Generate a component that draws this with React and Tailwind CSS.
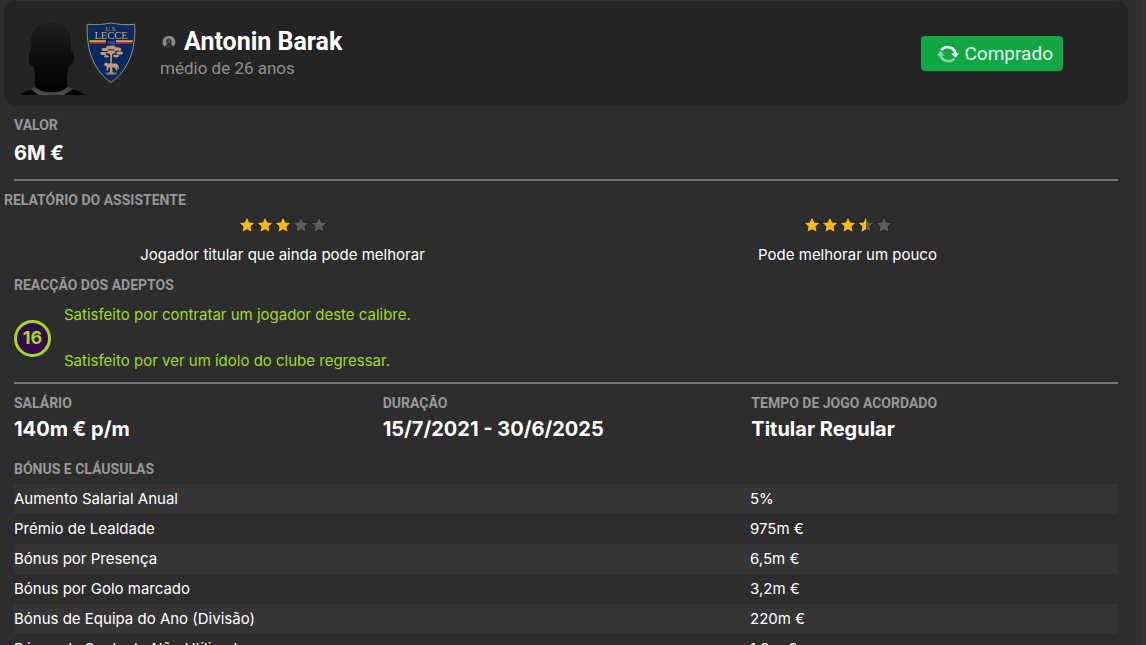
const bonuses = [
    { name: "Aumento Salarial Anual", value: "5%" },
    { name: "Prémio de Lealdade", value: "975m €" },
    { name: "Bónus por Presença", value: "6,5m €" },
    { name: "Bónus por Golo marcado", value: "3,2m €" },
    { name: "Bónus de Equipa do Ano (Divisão)", value: "220m €" },
    { name: "Bónus de Suplente Não Utilizado", value: "1,9m €" },
];

const terms = [
    { label: "Salário", value: "140m € p/m" },
    { label: "Duração", value: "15/7/2021 - 30/6/2025" },
    { label: "Tempo de jogo acordado", value: "Titular Regular" },
];

const reports = [
    { stars: 3, text: "Jogador titular que ainda pode melhorar" },
    { stars: 3.5, text: "Pode melhorar um pouco" },
];

export default function App() {
    return (<div className="flex h-screen overflow-hidden bg-[#2d2d2d] font-['Inter',sans-serif] text-white">
      <main className="min-w-0 flex-1 pr-[11px]">
        <PlayerHeader />

        <section className="pt-[9px] pr-3 pl-3.5">
          <Label>Valor</Label>
          <p className="mt-1 text-xl leading-7 font-bold">6M €</p>
          <Divider className="mt-3"/>
        </section>

        <section className="pt-[9px]">
          <Label className="pl-1">Relatório do assistente</Label>
          <div className="mt-1.5 grid grid-cols-2 text-center">
            {reports.map((r) => (<div key={r.text} className="flex flex-col items-center">
                <Stars value={r.stars}/>
                <p className="mt-[9px] text-[15px] leading-6">{r.text}</p>
              </div>))}
          </div>
        </section>

        <section className="pt-2 pr-3 pl-3.5">
          <Label>Reacção dos adeptos</Label>
          <div className="mt-2 flex items-center gap-[13px] text-[#a4dc1c]">
            <span className="flex h-[37px] w-[37px] items-center justify-center rounded-full border-3 border-[#a4dc1c] bg-[#35094f] text-lg font-bold">16</span>
            <div className="space-y-[22px] text-[15px] leading-6">
              <p>Satisfeito por contratar um jogador deste calibre.</p>
              <p>Satisfeito por ver um ídolo do clube regressar.</p>
            </div>
          </div>
          <Divider className="mt-[9px]"/>
        </section>

        <section className="grid grid-cols-3 gap-0.5 pt-[9px] pr-3 pl-3.5">
          {terms.map((t) => (<div key={t.label}>
              <Label>{t.label}</Label>
              <p className="mt-0.5 text-xl leading-7 font-bold">{t.value}</p>
            </div>))}
        </section>

        <section className="pt-4 pr-3 pl-3.5">
          <Label>Bónus e cláusulas</Label>
          <table className="mt-[5px] w-full table-fixed text-[15px]">
            <tbody>
              {bonuses.map((b) => (<tr key={b.name} className="h-[30px] odd:bg-[#353535]">
                  <th scope="row" className="w-2/3 p-0 text-left font-normal">{b.name}</th>
                  <td className="p-0">{b.value}</td>
                </tr>))}
            </tbody>
          </table>
        </section>
      </main>
      <div className="w-[5px] shrink-0 bg-[#353535]"/>
    </div>);
}

function PlayerHeader() {
    return (<header className="mt-px mr-0.5 ml-1 flex h-[105px] items-center rounded-xl bg-[#242424] pr-[65px] pl-4">
      <div className="flex items-start gap-0 pt-2">
        <Silhouette />
        <LecceCrest />
      </div>
      <div className="ml-6 flex-1">
        <div className="flex items-center gap-2">
          <PersonIcon />
          <h1 className="font-['Roboto',sans-serif] text-[25px] leading-7 font-bold">Antonin Barak</h1>
        </div>
        <p className="font-['Roboto',sans-serif] text-[17px] leading-6 text-[#8f8f8f]">médio de 26 anos</p>
      </div>
      <button type="button" className="flex h-[35px] items-center gap-1.5 rounded bg-[#12a745] pr-2.5 pl-4 font-['Roboto',sans-serif] text-[19px] leading-6 text-[#e8f5ec]">
        <SwapIcon /> Comprado
      </button>
    </header>);
}

function Label({ className = "", children }) {
    return <h2 className={`text-sm leading-5 font-bold text-[#979797] uppercase font-['Roboto',sans-serif] ${className}`}>{children}</h2>;
}

function Divider({ className = "" }) {
    return <hr className={`border-0 border-t-2 border-[#757575] ${className}`}/>;
}

function Stars({ value }) {
    return (<div role="img" aria-label={`${value} de 5`} className="flex h-[18px] items-center">
      {[0, 1, 2, 3, 4].map((i) => (<Star key={i} fill={Math.min(1, Math.max(0, value - i))}/>))}
    </div>);
}

function Star({ fill }) {
    const points = "9,1.8 11.2,6.5 16.2,7.1 12.5,10.6 13.5,15.7 9,13.2 4.5,15.7 5.5,10.6 1.8,7.1 6.8,6.5";
    const left = "9,1.8 9,13.2 4.5,15.7 5.5,10.6 1.8,7.1 6.8,6.5";
    return (<svg viewBox="0 0 18 18" className="h-[18px] w-[18px]">
      <polygon points={points} fill={fill === 1 ? "#f8bd0b" : "#5c5c5c"} stroke="#202020" strokeWidth="1.6" paintOrder="stroke"/>
      {fill === 0.5 && <polygon points={left} fill="#f8bd0b"/>}
    </svg>);
}

function PersonIcon() {
    return (<svg viewBox="0 0 14 14" className="ml-0.5 h-3.5 w-3.5">
      <path d="M3 12 C-1 9 0 1 7 1 C14 1 15 9 11 12 C10.9 10.4 10 9.5 8.7 9 C10.6 7.2 9.8 3.4 7 3.4 C4.2 3.4 3.4 7.2 5.3 9 C4 9.5 3.1 10.4 3 12 Z" fill="#8c8c8c"/>
      <ellipse cx="7" cy="6.3" rx="1.7" ry="2.1" fill="#555"/>
      <path d="M4 12.6 C4.2 10.6 5.2 10 7 10 C8.8 10 9.8 10.6 10 12.6 Z" fill="#3a3a3a"/>
    </svg>);
}

function SwapIcon() {
    return (<svg viewBox="0 0 22 20" className="h-5 w-[22px]" fill="none" strokeWidth="2.6">
      <path d="M4.2 6.2 A8 7.6 0 0 1 18.6 10" stroke="#fff"/>
      <path d="M14.2 9.4 H22 L18.4 13.8 Z" fill="#fff"/>
      <path d="M17.4 14.6 A8 7.6 0 0 1 3.4 10.4" stroke="#8fd3a4"/>
      <path d="M0 11.4 H7.4 L3.6 6.8 Z" fill="#8fd3a4"/>
    </svg>);
}

function Silhouette() {
    return (<svg viewBox="0 0 66 76" className="h-[76px] w-[66px]">
      <defs>
        <linearGradient id="skin" x1="0" y1="0" x2="0" y2="1">
          <stop offset="0" stopColor="#1d1d1d"/>
          <stop offset="0.5" stopColor="#0d0d0d"/>
          <stop offset="1" stopColor="#000"/>
        </linearGradient>
      </defs>
      <path d="M11 31 C10 20 11 12 17 7 C22 3 29 2 35 3 C40 3 44 4 45 7 L51 15 L50 18 C51 22 51 27 51 31 C55 32 54 38 53 42 C52 45 49 46 48 48 C48 52 47 56 47 60 V67 C41 75 20 75 15 68 V52 C14 49 14 47 13 46 C9 46 9 40 9 36 C9 32 9 31 11 31 Z" fill="url(#skin)"/>
      <path d="M1 75 C5 71 10 70 14 68 C21 74 41 74 49 68 C53 70 61 71 65 75 Z" fill="#050505"/>
      <path d="M11 69 L15 67 C23 74 40 74 48 67 L53 69 C49 72 46 73 44 75 H19 C16 73 14 72 11 69 Z" fill="#484848"/>
    </svg>);
}

function LecceCrest() {
    return (<svg viewBox="0 0 50 62" className="mt-0.5 h-[62px] w-[50px]">
      <path d="M1.3 2.2 C9 3.4 18 2.4 25 1 C32 2.4 41 3.4 48.7 2.2 C49.6 21 46.5 45 25 60.6 C3.5 45 0.4 21 1.3 2.2 Z" fill="#032a62" stroke="#a58f68" strokeWidth="1"/>
      <text x="25" y="8.6" textAnchor="middle" fontSize="6.5" fill="#c9a37c" className="font-['Liberation_Serif',serif]">U.S.</text>
      <text x="25" y="16.6" textAnchor="middle" fontSize="10.5" fill="#d0a77c" className="font-['Liberation_Serif',serif]">LECCE</text>
      <path d="M3.4 18.2 H20 V20.2 H3.4 Z M30 18.2 H46.6 V20.2 H30 Z" fill="#d2b81a"/>
      <path d="M3.8 20.2 H20 V21.8 H3.8 Z M30 20.2 H46.2 V21.8 H30 Z" fill="#d5203a"/>
      <text x="25" y="21.8" textAnchor="middle" fontSize="4" fill="#8a8580" className="font-['Liberation_Serif',serif]">1908</text>
      <g fill="#c69a72">
        <ellipse cx="25" cy="25.6" rx="5" ry="2.2"/>
        <ellipse cx="19" cy="27.6" rx="3.4" ry="1.9"/>
        <ellipse cx="31.4" cy="27.2" rx="3.8" ry="2"/>
        <ellipse cx="17.4" cy="31.4" rx="3.2" ry="1.6"/>
        <ellipse cx="25" cy="30" rx="4.4" ry="2"/>
        <ellipse cx="33.6" cy="31" rx="3.4" ry="1.7"/>
        <ellipse cx="30" cy="34" rx="3" ry="1.4"/>
        <ellipse cx="20.6" cy="34.2" rx="2.6" ry="1.3"/>
        <path d="M24.3 31 H26.2 L25.7 41 L26.6 50 L29.5 52.5 H20.5 L24 50 Z"/>
        <path d="M18 42 L20 40.4 L22 41.6 H30 L32.2 43 L33.2 46.6 L32.4 47 L31 44.6 L31.6 48.6 H30.2 L28.6 45.4 H23 L21.8 48.6 H20.4 L20.8 44.4 L18.4 43.4 Z"/>
      </g>
      <path d="M17 29.6 H22 M27 32.2 H31 M20 32.4 L24 34 M22 27.8 H28 M29 29.4 L33 29" stroke="#032a62" strokeWidth="0.8"/>
      <path d="M19.4 51.2 H30.8" stroke="#8a7b74" strokeWidth="1.2"/>
    </svg>);
}
